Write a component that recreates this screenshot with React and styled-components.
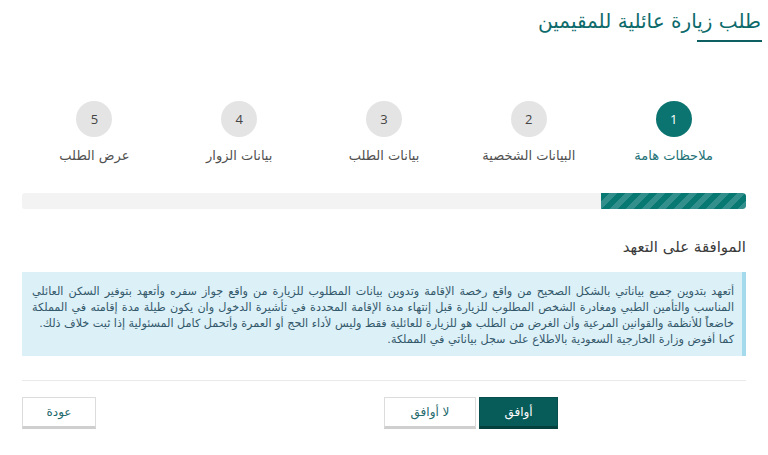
import React from "react";
import styled, { createGlobalStyle } from "styled-components";

const Global = createGlobalStyle`
  html, body { margin: 0; padding: 0; background: #fff; }
  body { font-family: "DejaVu Sans", "Noto Sans", sans-serif; direction: rtl; }
  * { box-sizing: border-box; }
`;

const Page = styled.div`
  width: 768px;
  height: 455px;
  overflow: hidden;
  direction: rtl;
`;

const Header = styled.header`
  padding: 6px 7px 0 0;
  height: 44px;
  display: flex;
  justify-content: flex-start;
`;

const Title = styled.h1`
  margin: 0;
  font-size: 20px;
  font-weight: normal;
  color: #0d6a6b;
  line-height: 30px;
  height: 30px;
  position: relative;
  &::after {
    content: "";
    position: absolute;
    right: -1px;
    top: 34px;
    width: 65px;
    height: 2px;
    background: #0d5f61;
  }
`;

const Content = styled.main`
  padding: 0 22px;
`;

const Steps = styled.ol`
  list-style: none;
  margin: 57px 0 0;
  padding: 0;
  display: grid;
  grid-template-columns: repeat(5, 1fr);
`;

const Step = styled.li`
  display: flex;
  flex-direction: column;
  align-items: center;
`;

const Circle = styled.span`
  width: 36px;
  height: 36px;
  border-radius: 50%;
  display: flex;
  align-items: center;
  justify-content: center;
  font-family: "Open Sans", "Liberation Sans", sans-serif;
  font-size: 13px;
  background: ${(p) => (p.$active ? "#0b7470" : "#e4e4e4")};
  color: ${(p) => (p.$active ? "#fff" : "#444")};
`;

const StepLabel = styled.span`
  margin-top: 10px;
  font-size: 13px;
  line-height: 18px;
  color: ${(p) => (p.$active ? "#1d7176" : "#505050")};
`;

const Progress = styled.div`
  margin-top: 28px;
  height: 16px;
  background: #f3f3f3;
  border-radius: 3px;
  overflow: hidden;
  display: flex;
`;

const Bar = styled.div`
  height: 100%;
  background-color: #087873;
  background-image: linear-gradient(
    -45deg,
    rgba(255, 255, 255, 0.17) 25%,
    transparent 25%,
    transparent 50%,
    rgba(255, 255, 255, 0.17) 50%,
    rgba(255, 255, 255, 0.17) 75%,
    transparent 75%,
    transparent
  );
  background-size: 16px 16px;
  border-radius: 0 3px 3px 0;
`;

const SectionTitle = styled.h2`
  margin: 27px 0 0;
  font-size: 15px;
  font-weight: normal;
  line-height: 22px;
  color: #3a3a3a;
`;

const Alert = styled.div`
  margin-top: 14px;
  background: #dcf0f8;
  border-right: 4px solid #a5daec;
  padding: 12px 8px 8px 10px;
  color: #33586a;
  font-size: 11.2px;
  line-height: 16px;
  height: 84px;
`;

const Para = styled.p`
  margin: 0;
  text-align: justify;
`;

const Divider = styled.hr`
  margin: 24px 0 0;
  border: 0;
  border-top: 1px solid #e9e9e9;
`;

const Actions = styled.div`
  margin-top: 16px;
  display: flex;
  align-items: flex-start;
  gap: 3px;
`;

const Button = styled.button`
  height: 32px;
  padding: 0;
  font-family: "DejaVu Sans", sans-serif;
  font-size: 12px;
  cursor: pointer;
  width: ${(p) => p.$w}px;
  background: ${(p) => (p.$primary ? "#075b58" : "#fff")};
  color: ${(p) => (p.$primary ? "#fff" : "#24696c")};
  border: 1px solid ${(p) => (p.$primary ? "#064f4c" : "#dcdcdc")};
  border-bottom: 3px solid ${(p) => (p.$primary ? "#04403e" : "#cfcfcf")};
  margin-right: ${(p) => p.$mr || 0}px;
`;

const Spacer = styled.div`
  flex: 1;
`;

const steps = ["ملاحظات هامة", "البيانات الشخصية", "بيانات الطلب", "بيانات الزوار", "عرض الطلب"];

export default function App() {
  return (
    <Page>
      <Global />
      <Header>
        <Title>طلب زيارة عائلية للمقيمين</Title>
      </Header>
      <Content>
        <Steps>
          {steps.map((s, i) => (
            <Step key={s}>
              <Circle $active={i === 0}>{i + 1}</Circle>
              <StepLabel $active={i === 0}>{s}</StepLabel>
            </Step>
          ))}
        </Steps>
        <Progress>
          <Bar style={{ width: "20%" }} />
        </Progress>
        <SectionTitle>الموافقة على التعهد</SectionTitle>
        <Alert>
          <Para>
            أتعهد بتدوين جميع بياناتي بالشكل الصحيح من واقع رخصة الإقامة وتدوين بيانات المطلوب للزيارة من واقع جواز سفره وأتعهد بتوفير السكن العائلي المناسب والتأمين الطبي ومغادرة الشخص المطلوب للزيارة قبل إنتهاء مدة الإقامة المحددة في تأشيرة الدخول وان يكون طيلة مدة إقامته في المملكة خاضعاً للأنظمة والقوانين المرعية وأن الغرض من الطلب هو للزيارة للعائلية فقط وليس لأداء الحج أو العمرة وأتحمل كامل المسئولية إذا ثبت خلاف ذلك.
          </Para>
          <Para>كما أفوض وزارة الخارجية السعودية بالاطلاع على سجل بياناتي في المملكة.</Para>
        </Alert>
        <Divider />
        <Actions>
          <Button $primary $w={79} $mr={188}>أوافق</Button>
          <Button $w={92}>لا أوافق</Button>
          <Spacer />
          <Button $w={74}>عودة</Button>
        </Actions>
      </Content>
    </Page>
  );
}
